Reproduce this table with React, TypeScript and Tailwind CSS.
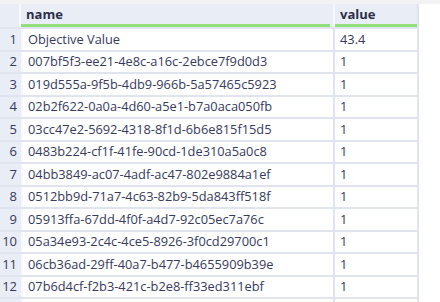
import React from "react";

const rows: [string, string][] = [
  ["Objective Value", "43.4"],
  ["007bf5f3-ee21-4e8c-a16c-2ebce7f9d0d3", "1"],
  ["019d555a-9f5b-4db9-966b-5a57465c5923", "1"],
  ["02b2f622-0a0a-4d60-a5e1-b7a0aca050fb", "1"],
  ["03cc47e2-5692-4318-8f1d-6b6e815f15d5", "1"],
  ["0483b224-cf1f-41fe-90cd-1de310a5a0c8", "1"],
  ["04bb3849-ac07-4adf-ac47-802e9884a1ef", "1"],
  ["0512bb9d-71a7-4c63-82b9-5da843ff518f", "1"],
  ["05913ffa-67dd-4f0f-a4d7-92c05ec7a76c", "1"],
  ["05a34e93-2c4c-4ce5-8926-3f0cd29700c1", "1"],
  ["06cb36ad-29ff-40a7-b477-b4655909b39e", "1"],
  ["07b6d4cf-f2b3-421c-b2e8-ff33ed311ebf", "1"],
];

export default function App() {
  return (
    <div
      className="w-[440px] h-[302px] overflow-hidden bg-white text-[12.8px] text-[#363a5c]"
      style={{ fontFamily: '"Segoe UI", "Open Sans", "Noto Sans", sans-serif' }}
    >
      <div className="h-[4px] bg-[#f3f3f4]" />
      <div className="w-[419px] bg-[#dfe4ef] pr-[2px]">
        {/* header */}
        <div className="flex h-[23px] bg-[#e9edf5]">
          <div className="w-[21px] shrink-0 border-r-2 border-[#f7f8fb]" />
          <div className="w-[312px] shrink-0 flex flex-col">
            <div className="flex-1 pl-[5px] font-bold text-[13px] text-[#2c3049] leading-[20px]">name</div>
            <div className="h-[3px] bg-[#8fe07a] mr-[3px]" />
          </div>
          <div className="flex-1 flex flex-col border-l-2 border-[#f7f8fb]">
            <div className="flex-1 pl-[5px] font-bold text-[13px] text-[#2c3049] leading-[20px]">value</div>
            <div className="h-[3px] bg-[#8fe07a]" />
          </div>
        </div>
        {rows.map(([n, v], i) => (
          <div
            key={i}
            className={
              i % 2 === 0
                ? "flex h-[23px] border-t-2 border-[#dfe4ef]"
                : "flex h-[22px] border-t-2 border-[#dfe4ef]"
            }
          >
            <div className="w-[21px] shrink-0 bg-[#e9edf5] text-right pr-[4px] text-[#363a5c] flex items-center justify-end text-[13px]">
              {i + 1}
            </div>
            <div className="w-[312px] shrink-0 bg-white border-l-2 border-[#f7f8fb] pl-[5px] flex items-center whitespace-nowrap overflow-hidden">
              {n}
            </div>
            <div className="flex-1 bg-white ml-[2px] pl-[5px] flex items-center">{v}</div>
          </div>
        ))}
        <div className="h-[10px] border-t-2 border-[#dfe4ef] flex">
          <div className="w-[21px] bg-[#e9edf5]" />
          <div className="w-[312px] bg-white border-l-2 border-[#f7f8fb]" />
          <div className="flex-1 bg-white ml-[2px]" />
        </div>
      </div>
    </div>
  );
}
